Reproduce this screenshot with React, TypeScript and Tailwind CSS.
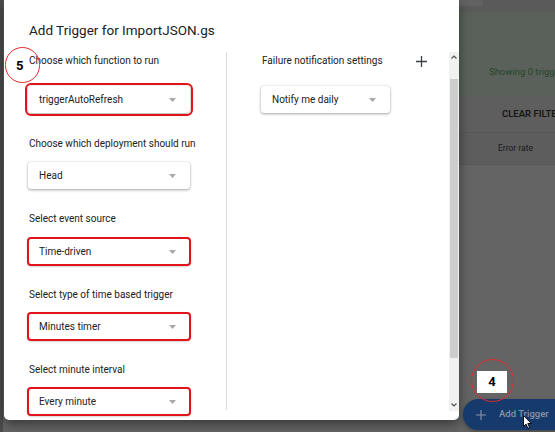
import React from 'react';
import clsx from 'clsx';

// Dropdown used in the trigger form
const Select = ({ value, className, mark }: { value: string; className?: string; mark?: 'wide' | 'tight' }) => (
  <div
    className={clsx(
      'flex h-[27px] items-center justify-between rounded-[3px] bg-white pl-[11px] pr-[14px] shadow-[0_1px_3px_rgba(0,0,0,0.35),0_0_1px_rgba(0,0,0,0.2)]',
      mark === 'wide' && 'outline-2 outline-[#e3131b] outline-offset-[1px]',
      mark === 'tight' && 'outline-2 outline-[#e3131b] outline-offset-[-1px]',
      className
    )}
  >
    <span className="text-[10px] leading-none text-[#202124]">{value}</span>
    <svg width="7" height="4" viewBox="0 0 7 4">
      <path d="M0 0h7L3.5 4z" fill="#a8a8a8" />
    </svg>
  </div>
);

const Label = ({ children, className }: { children: React.ReactNode; className?: string }) => (
  <div className={clsx('pl-px text-[10px] leading-[14px] text-[#202124]', className)}>{children}</div>
);

const Scrollbar = () => (
  <div className="flex h-[359px] w-[10px] flex-col bg-[#f1f1f1]">
    <div className="flex h-[10px] items-center justify-center">
      <svg width="6" height="4" viewBox="0 0 6 4">
        <path d="M0.5 3.5L3 1l2.5 2.5" fill="none" stroke="#505050" strokeWidth="1.2" />
      </svg>
    </div>
    <div className="h-[17px]" />
    <div className="mx-px h-[279px] bg-[#cdcdcd]" />
    <div className="flex-1" />
    <div className="flex h-[12px] items-center justify-center">
      <svg width="6" height="4" viewBox="0 0 6 4">
        <path d="M0.5 0.5L3 3l2.5-2.5" fill="none" stroke="#505050" strokeWidth="1.2" />
      </svg>
    </div>
  </div>
);

const TriggerDialog = () => (
  <div className="absolute left-[4px] top-0 h-[420px] w-[455px] overflow-hidden rounded-b-[5px] bg-white shadow-[0_4px_12px_rgba(0,0,0,0.45)]">
    <div className="pl-[25px] pt-[22px] text-[13.5px] leading-[16px] text-[#202124]">Add Trigger for ImportJSON.gs</div>
    <div className="mt-[14px] flex">
      <div className="w-[222px] pl-[24px]">
        <Label className="mt-[2px]">Choose which function to run</Label>
        <Select value="triggerAutoRefresh" className="mt-[18px] w-[162px]" mark="wide" />
        <Label className="mt-[24px]">Choose which deployment should run</Label>
        <Select value="Head" className="mt-[11px] w-[162px]" />
        <Label className="mt-[23px]">Select event source</Label>
        <Select value="Time-driven" className="mt-[12px] w-[162px]" mark="tight" />
        <Label className="mt-[23px]">Select type of time based trigger</Label>
        <Select value="Minutes timer" className="mt-[11px] w-[162px]" mark="tight" />
        <Label className="mt-[23px]">Select minute interval</Label>
        <Select value="Every minute" className="mt-[11px] w-[162px]" mark="tight" />
      </div>
      <div className="h-[358px] w-px bg-[#dadce0]" />
      <div className="flex-1 pl-[34px] pr-[22px]">
        <div className="mt-[2px] flex items-center justify-between">
          <Label className="pl-0">Failure notification settings</Label>
          <svg width="11" height="11" viewBox="0 0 11 11">
            <path d="M5.5 0v11M0 5.5h11" stroke="#3c4043" strokeWidth="1.3" />
          </svg>
        </div>
        <Select value="Notify me daily" className="mt-[18px] w-[129px]" />
      </div>
      <Scrollbar />
    </div>
  </div>
);

// Page behind the modal overlay (only the right edge is visible)
const BackgroundPage = () => (
  <div className="flex h-full flex-col border-l-[3px] border-[#4c4c4c] bg-[#636363] text-[#1d1d1d]">
    <div className="h-[12px] bg-[#5a5a5a] pl-[456px]">
      <div className="h-[6px] w-[24px] bg-[#626262]" />
    </div>
    <div className="h-[85px] bg-[#5a615a] pl-[486px] pt-[53px]">
      <div className="whitespace-nowrap text-[9.5px] leading-[14px] text-[#27442d]">Showing 0 triggers</div>
    </div>
    <div className="flex h-[36px] items-center border-b border-[#585858] bg-[#5e5e5e] pl-[499px]">
      <span className="whitespace-nowrap text-[9.5px] font-semibold text-[#161616]">CLEAR FILTERS</span>
    </div>
    <div className="flex h-[32px] items-center border-b border-[#575757] bg-[#5d5d5d] pl-[495px]">
      <span className="whitespace-nowrap text-[8.5px] text-[#1a1a1a]">Error rate</span>
    </div>
    <div className="flex-1 bg-[#646464]" />
  </div>
);

export default function App() {
  return (
    <div className="relative h-[432px] w-[555px] overflow-hidden font-['Roboto',sans-serif]">
      <BackgroundPage />
      <TriggerDialog />

      {/* step annotation 5 */}
      <div className="absolute left-[5px] top-[47px] h-[36px] w-[35px] rounded-full border-[1.5px] border-[#e32a2a]" />
      <div className="absolute left-[16px] top-[57px] text-[13px] font-bold leading-[17px] text-black">5</div>

      {/* floating add trigger button */}
      <div className="absolute left-[463px] top-[399px] flex h-[31px] w-[110px] items-center rounded-full bg-[#173a6d] pl-[13px] shadow-[0_2px_4px_rgba(0,0,0,0.3)]">
        <svg width="10" height="10" viewBox="0 0 10 10">
          <path d="M5 0v10M0 5h10" stroke="#8191ab" strokeWidth="1.2" />
        </svg>
        <span className="ml-[13px] whitespace-nowrap text-[9.5px] font-medium text-[#8493ab]">Add Trigger</span>
      </div>

      {/* step annotation 4 */}
      <div className="absolute left-[477px] top-[371px] flex h-[22px] w-[30px] items-center justify-center bg-white text-[13px] font-bold text-black">4</div>
      <div className="absolute left-[471px] top-[359px] h-[43px] w-[43px] rounded-full border-[1.5px] border-[#e32a2a]" />

      {/* mouse cursor */}
      <svg className="absolute left-[523px] top-[415px]" width="9" height="14" viewBox="0 0 9 14">
        <path d="M0.5 0.5v11l2.6-2.4 1.8 4.2 1.7-0.7-1.8-4.1h3.5z" fill="#fff" stroke="#000" strokeWidth="0.9" strokeLinejoin="round" />
      </svg>
    </div>
  );
}
